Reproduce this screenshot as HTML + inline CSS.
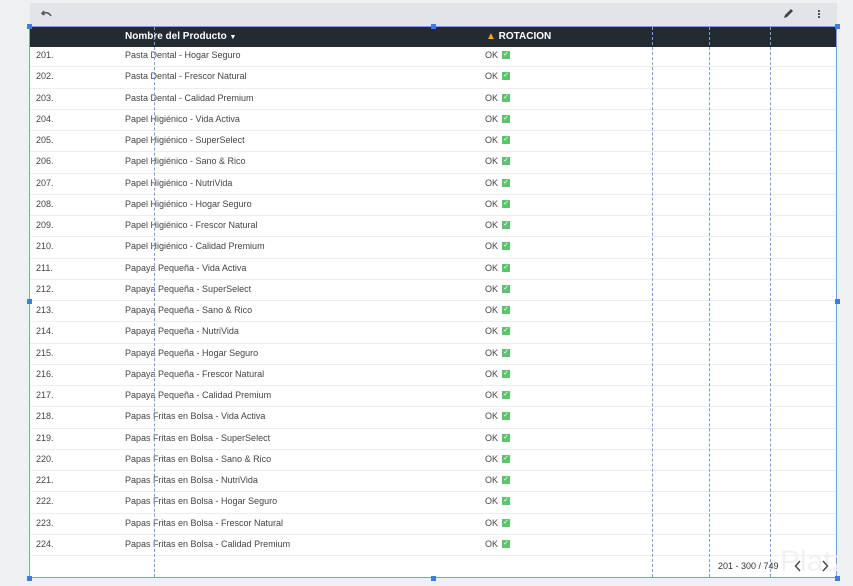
<!DOCTYPE html>
<html><head><style>
body{margin:0;width:853px;height:586px;background:#eef0f2;font-family:"Liberation Sans",sans-serif;position:relative;overflow:hidden}
.tb{position:absolute;left:30px;top:3px;width:807px;height:23px;background:#e2e4e7}
.tbl{position:absolute;left:29px;top:26px;width:808px;height:552px;background:#fff;border:1px solid #7a9fd6;box-sizing:border-box}
.hd{position:absolute;left:0;top:0;width:100%;height:20px;background:#232a30;color:#fff;font-weight:bold;font-size:10px}
.row{position:absolute;left:0;width:100%;height:21.26px;border-bottom:1px solid #eceef0;box-sizing:border-box;font-size:9px;color:#444}
.row span{position:absolute;top:4px;line-height:10px}
.ck{display:inline-block;width:8px;height:8px;background:#5cc46c;color:#fff;font-size:7px;line-height:8px;text-align:center;vertical-align:top;margin-left:4px;font-style:normal;margin-top:1px}
.vl{position:absolute;top:0;height:100%;border-left:1px dashed #7a9fd6}
.h{position:absolute;width:5px;height:5px;background:#3b7de0}
</style></head><body>
<div class="tb">
<svg style="position:absolute;left:11px;top:6px" width="12" height="10" viewBox="0 0 12 10"><path d="M3 2 L1 4.5 L3.5 6 M1.5 4.5 Q7 2 10 7" stroke="#555" stroke-width="1.5" fill="none"/></svg>
<svg style="position:absolute;left:752px;top:5px" width="12" height="12" viewBox="0 0 12 12"><path d="M2 10 L3 7 L9 1 L11 3 L5 9 Z" fill="#444"/></svg>
<div style="position:absolute;left:788px;top:7px;width:2px;height:2px;background:#555;box-shadow:0 3px #555,0 6px #555"></div>
</div>
<div class="tbl">
<div class="hd"><span style="position:absolute;left:95px;top:4px">Nombre del Producto <span style="font-size:7px">▼</span></span>
<span style="position:absolute;left:456px;top:4px"><span style="color:#f4a623">▲</span> ROTACION</span></div>
<div id="rows"></div>
<div class="vl" style="left:124px"></div><div class="vl" style="left:622px"></div><div class="vl" style="left:679px"></div><div class="vl" style="left:740px"></div>
<div style="position:absolute;left:750px;top:518px;font-size:30px;color:#f0f2f0">Platzi</div>
<div style="position:absolute;left:688px;top:534px;font-size:9px;color:#333">201 - 300 / 749</div>
<svg style="position:absolute;left:764px;top:533px" width="8" height="12" viewBox="0 0 8 12"><path d="M6 1 L1.5 6 L6 11" stroke="#444" stroke-width="1.4" fill="none"/></svg>
<svg style="position:absolute;left:791px;top:533px" width="8" height="12" viewBox="0 0 8 12"><path d="M2 1 L6.5 6 L2 11" stroke="#444" stroke-width="1.4" fill="none"/></svg>
</div>
<div class="h" style="left:27px;top:24px"></div><div class="h" style="left:431px;top:24px"></div><div class="h" style="left:835px;top:24px"></div>
<div class="h" style="left:27px;top:299px"></div><div class="h" style="left:835px;top:299px"></div>
<div class="h" style="left:27px;top:576px"></div><div class="h" style="left:431px;top:576px"></div><div class="h" style="left:835px;top:576px"></div>
<script>
var n=["Pasta Dental - Hogar Seguro","Pasta Dental - Frescor Natural","Pasta Dental - Calidad Premium","Papel Higiénico - Vida Activa","Papel Higiénico - SuperSelect","Papel Higiénico - Sano & Rico","Papel Higiénico - NutriVida","Papel Higiénico - Hogar Seguro","Papel Higiénico - Frescor Natural","Papel Higiénico - Calidad Premium","Papaya Pequeña - Vida Activa","Papaya Pequeña - SuperSelect","Papaya Pequeña - Sano & Rico","Papaya Pequeña - NutriVida","Papaya Pequeña - Hogar Seguro","Papaya Pequeña - Frescor Natural","Papaya Pequeña - Calidad Premium","Papas Fritas en Bolsa - Vida Activa","Papas Fritas en Bolsa - SuperSelect","Papas Fritas en Bolsa - Sano & Rico","Papas Fritas en Bolsa - NutriVida","Papas Fritas en Bolsa - Hogar Seguro","Papas Fritas en Bolsa - Frescor Natural","Papas Fritas en Bolsa - Calidad Premium"];
var h="";n.forEach(function(t,i){h+='<div class="row" style="top:'+(19+i*21.26)+'px"><span style="left:6px">'+(201+i)+'.</span><span style="left:95px">'+t.replace("&","&amp;")+'</span><span style="left:455px">OK<i class="ck">✓</i></span></div>'});
document.getElementById("rows").innerHTML=h;
</script>
</body></html>
